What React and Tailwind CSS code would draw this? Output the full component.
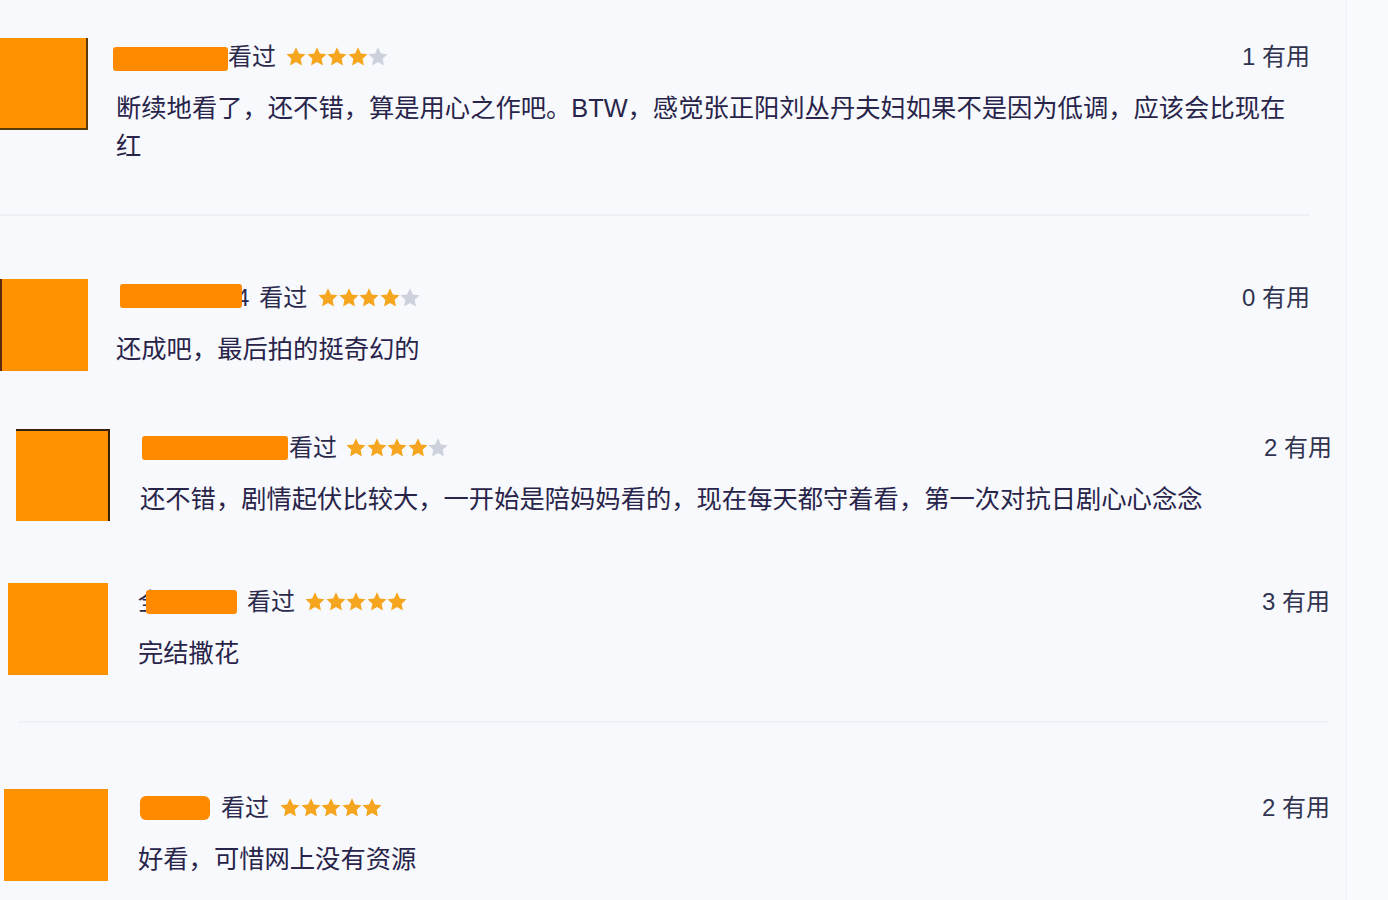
import React from "react";

const FONT = { fontFamily: '"Liberation Sans", "Noto Sans CJK SC", sans-serif' };

function Star({ filled }) {
  return (
    <svg viewBox="1.2 1.2 21.6 21.6" className="w-[20px] h-[20px]">
      <path
        d="M12 1.5l3.1 6.6 7.2.85-5.3 4.95 1.4 7.15-6.4-3.6-6.4 3.6 1.4-7.15-5.3-4.95 7.2-.85z"
        fill={filled ? "#f6a51e" : "#cdd1dc"}
      />
    </svg>
  );
}

function Stars({ count, className }) {
  return (
    <div className={`flex items-center gap-[0.5px] ${className}`}>
      {[0, 1, 2, 3, 4].map((i) => (
        <Star key={i} filled={i < count} />
      ))}
    </div>
  );
}

function Blob({ className }) {
  return <div className={`h-[24px] rounded-[3px] bg-[#ff8a00] relative ${className}`} />;
}

function Row({ rowClass, avatarClass, contentClass, textClass = "", name, starClass, rating, useful, children }) {
  return (
    <div className={`flex items-start ${rowClass}`}>
      <div className={`shrink-0 h-[92px] bg-[#ff9200] ${avatarClass}`} />
      <div className={`shrink-0 ${contentClass}`}>
        <div className="flex h-[38px] items-center justify-between text-[24px] text-[#2b2a4c]">
          <div className="flex items-center">
            {name}
            <span className="leading-none">看过</span>
            <Stars count={rating} className={starClass} />
          </div>
          <span className="text-[#30344f] leading-none">{useful} 有用</span>
        </div>
        <p className={`mt-[13px] text-[25.3px] leading-[38px] text-[#29244a] ${textClass}`}>{children}</p>
      </div>
    </div>
  );
}

export default function App() {
  return (
    <div className="flex w-[1388px] h-[900px] overflow-hidden bg-[#f7f9fd]" style={FONT}>
      <div className="w-[1346px] shrink-0 flex flex-col">
        <Row
          rowClass="mt-[38px]"
          avatarClass="w-[88px] border-r-2 border-b-2 border-[#5a3a08]"
          contentClass="ml-[28px] w-[1194px]"
          textClass="w-[1182px]"
          name={<Blob className="-ml-[3px] w-[115px] mt-[4px]" />}
          starClass="ml-[10px]"
          rating={4}
          useful={1}
        >
          断续地看了，还不错，算是用心之作吧。BTW，感觉张正阳刘丛丹夫妇如果不是因为低调，应该会比现在红
        </Row>

        <div className="mt-[49px] ml-[0px] w-[1310px] h-[2px] bg-[#eef1f7]" />

        <Row
          rowClass="mt-[63px]"
          avatarClass="w-[88px] border-l-2 border-[#5a2a08]"
          contentClass="ml-[28px] w-[1194px]"
          name={
            <>
              <Blob className="ml-[4px] w-[122px] -mt-[4px] z-10" />
              <span className="-ml-[6px] leading-none text-[#2b2a4c]">4</span>
              <span className="w-[10px]" />
            </>
          }
          starClass="ml-[11px]"
          rating={4}
          useful={0}
        >
          还成吧，最后拍的挺奇幻的
        </Row>

        <Row
          rowClass="mt-[58px]"
          avatarClass="ml-[16px] w-[94px] border-t-2 border-r-2 border-[#3a2006]"
          contentClass="ml-[30px] w-[1192px]"
          name={<Blob className="ml-[2px] w-[146px] mr-[1px]" />}
          starClass="ml-[9px]"
          rating={4}
          useful={2}
        >
          还不错，剧情起伏比较大，一开始是陪妈妈看的，现在每天都守着看，第一次对抗日剧心心念念
        </Row>

        <Row
          rowClass="mt-[62px]"
          avatarClass="ml-[8px] w-[100px]"
          contentClass="ml-[30px] w-[1192px]"
          name={
            <>
              <span className="leading-none">全</span>
              <Blob className="-ml-[16px] w-[91px] mr-[10px]" />
            </>
          }
          starClass="ml-[10px]"
          rating={5}
          useful={3}
        >
          完结撒花
        </Row>

        <div className="mt-[46px] ml-[18px] w-[1310px] h-[2px] bg-[#eef1f7]" />

        <Row
          rowClass="mt-[66px]"
          avatarClass="ml-[4px] w-[104px]"
          contentClass="ml-[30px] w-[1192px]"
          name={<Blob className="ml-[2px] w-[70px] mr-[11px] rounded-[6px]" />}
          starClass="ml-[11px]"
          rating={5}
          useful={2}
        >
          好看，可惜网上没有资源
        </Row>
      </div>
      <div className="flex-1 bg-[#fafbfe] border-l border-[#f1f3f8]" />
    </div>
  );
}
